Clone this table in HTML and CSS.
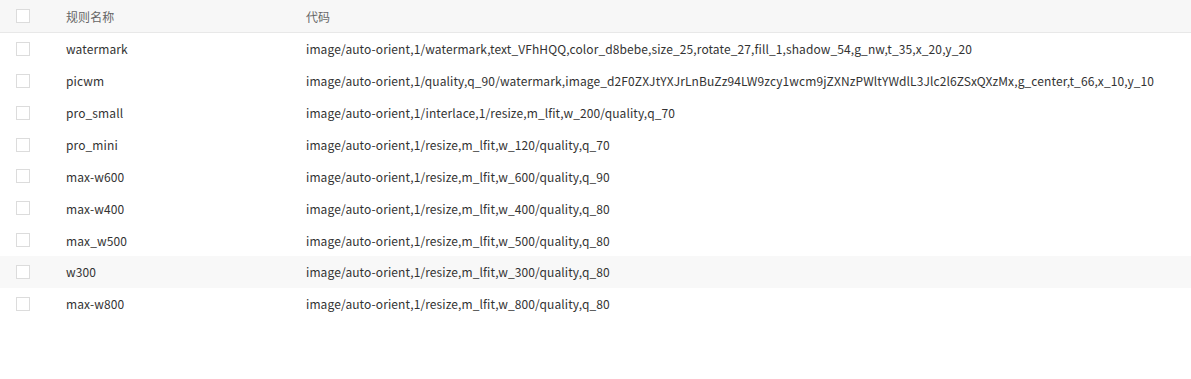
FILE: index.html
```html
<!DOCTYPE html>
<html lang="zh-CN">
<head>
<meta charset="utf-8">
<title>规则</title>
<link rel="stylesheet" href="styles.css">
</head>
<body>
<div class="table">
  <div class="row head">
    <div class="cell check"><span class="box"></span></div>
    <div class="cell">规则名称</div>
    <div class="cell">代码</div>
  </div>
  <div class="row">
    <div class="cell check"><span class="box"></span></div>
    <div class="cell">watermark</div>
    <div class="cell">image/auto-orient,1/watermark,text_VFhHQQ,color_d8bebe,size_25,rotate_27,fill_1,shadow_54,g_nw,t_35,x_20,y_20</div>
  </div>
  <div class="row">
    <div class="cell check"><span class="box"></span></div>
    <div class="cell">picwm</div>
    <div class="cell">image/auto-orient,1/quality,q_90/watermark,image_d2F0ZXJtYXJrLnBuZz94LW9zcy1wcm9jZXNzPWltYWdlL3Jlc2l6ZSxQXzMx,g_center,t_66,x_10,y_10</div>
  </div>
  <div class="row">
    <div class="cell check"><span class="box"></span></div>
    <div class="cell">pro_small</div>
    <div class="cell">image/auto-orient,1/interlace,1/resize,m_lfit,w_200/quality,q_70</div>
  </div>
  <div class="row">
    <div class="cell check"><span class="box"></span></div>
    <div class="cell">pro_mini</div>
    <div class="cell">image/auto-orient,1/resize,m_lfit,w_120/quality,q_70</div>
  </div>
  <div class="row">
    <div class="cell check"><span class="box"></span></div>
    <div class="cell">max-w600</div>
    <div class="cell">image/auto-orient,1/resize,m_lfit,w_600/quality,q_90</div>
  </div>
  <div class="row">
    <div class="cell check"><span class="box"></span></div>
    <div class="cell">max-w400</div>
    <div class="cell">image/auto-orient,1/resize,m_lfit,w_400/quality,q_80</div>
  </div>
  <div class="row">
    <div class="cell check"><span class="box"></span></div>
    <div class="cell">max_w500</div>
    <div class="cell">image/auto-orient,1/resize,m_lfit,w_500/quality,q_80</div>
  </div>
  <div class="row hover">
    <div class="cell check"><span class="box"></span></div>
    <div class="cell">w300</div>
    <div class="cell">image/auto-orient,1/resize,m_lfit,w_300/quality,q_80</div>
  </div>
  <div class="row">
    <div class="cell check"><span class="box"></span></div>
    <div class="cell">max-w800</div>
    <div class="cell">image/auto-orient,1/resize,m_lfit,w_800/quality,q_80</div>
  </div>
</div>
</body>
</html>
```

FILE: styles.css
```css
html, body {
  margin: 0;
  padding: 0;
  background: #fff;
}
body {
  font-family: "Noto Sans CJK SC", "Open Sans", sans-serif;
  font-size: 12px;
  letter-spacing: 0.1px;
  color: #333;
}
.table {
  display: flex;
  flex-direction: column;
}
.row {
  display: grid;
  grid-template-columns: 66px 240px 1fr;
  align-items: center;
  height: 31.86px;
}
.row.head {
  height: 32px;
  background: #f7f7f7;
  border-bottom: 1px solid #e8e8e8;
  color: #666;
}
.row.hover {
  background: #f8f8f8;
}
.cell {
  white-space: nowrap;
}
.check {
  padding-left: 16px;
  display: flex;
  align-items: center;
}
.box {
  width: 12px;
  height: 12px;
  border: 1px solid #dcdcdc;
  background: #fff;
}
```
